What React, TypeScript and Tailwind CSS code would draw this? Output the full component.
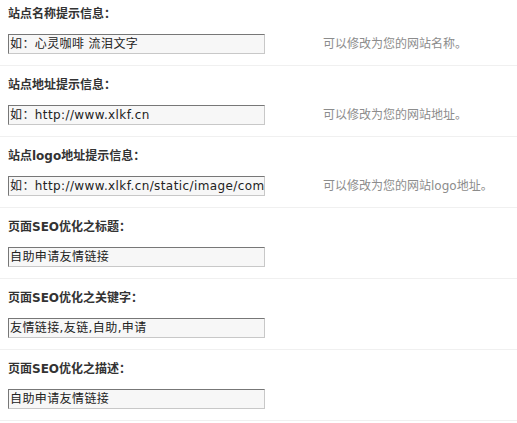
import React from "react";

const rows = [
  { label: "站点名称提示信息：", value: "如：心灵咖啡 流泪文字", hint: "可以修改为您的网站名称。" },
  { label: "站点地址提示信息：", value: "如：http://www.xlkf.cn", hint: "可以修改为您的网站地址。" },
  { label: "站点logo地址提示信息：", value: "如：http://www.xlkf.cn/static/image/com", hint: "可以修改为您的网站logo地址。" },
  { label: "页面SEO优化之标题：", value: "自助申请友情链接", hint: "" },
  { label: "页面SEO优化之关键字：", value: "友情链接,友链,自助,申请", hint: "" },
  { label: "页面SEO优化之描述：", value: "自助申请友情链接", hint: "" },
];

export default function App() {
  return (
    <div
      className="w-[517px] h-[423px] bg-white overflow-hidden"
      style={{ fontFamily: '"DejaVu Sans", "Noto Sans CJK SC", sans-serif' }}
    >
      {rows.map((r, i) => (
        <div key={i} className="pt-[6px] pb-[11px] mb-[5px] border-b border-[#f0f0f0]">
          <div className="pl-[8px] h-[17px] leading-[17px] text-[12px] font-bold text-[#333]">
            {r.label}
          </div>
          <div className="mt-[11px] flex items-center">
            <div className="ml-[8px] w-[257px] h-[20px] shrink-0 bg-[#f7f7f7] border border-t-[#777] border-l-[#777] border-r-[#c8c8c8] border-b-[#c8c8c8] overflow-hidden">
              <div className="pl-[1px] leading-[18px] text-[12px] tracking-[0.4px] text-[#222] whitespace-nowrap">
                {r.value}
              </div>
            </div>
            {r.hint && (
              <div className="ml-[58px] text-[12px] leading-[18px] text-[#8c8c8c] whitespace-nowrap">
                {r.hint}
              </div>
            )}
          </div>
        </div>
      ))}
    </div>
  );
}
